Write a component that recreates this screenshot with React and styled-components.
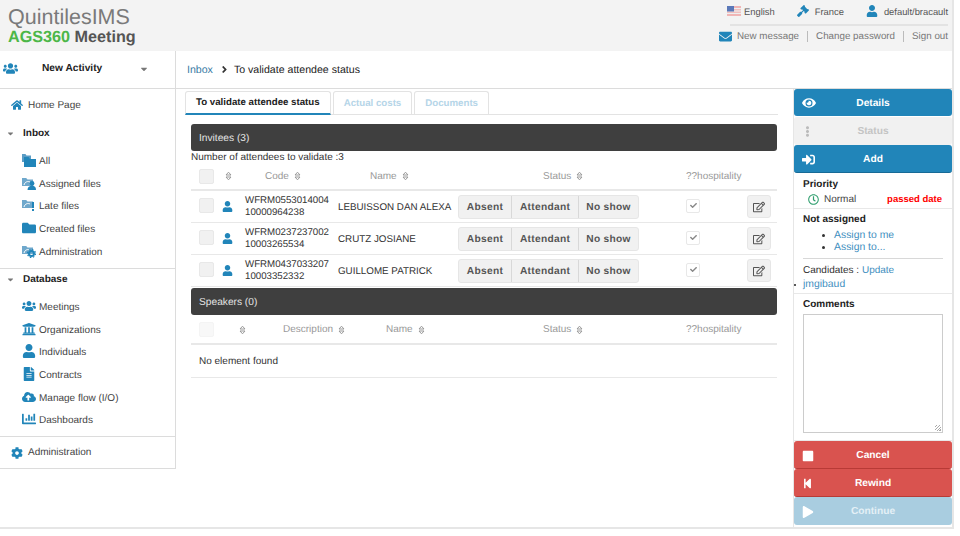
import React from 'react';
import styled, { createGlobalStyle } from 'styled-components';
import {
  FaHome, FaFolder, FaUsers, FaUniversity, FaUser, FaFileAlt, FaCloudUploadAlt,
  FaChartBar, FaCog, FaGavel, FaEnvelope, FaEye, FaEllipsisV, FaSignInAlt, FaStop, FaStepBackward,
  FaPlay, FaCheck, FaRegEdit, FaRegClock, FaCaretDown, FaAngleRight,
} from 'react-icons/fa';

const Global = createGlobalStyle`
  html, body { margin: 0; padding: 0; background: #fff; }
  body {
    font-family: "Liberation Sans", Arial, sans-serif;
    font-size: 10px;
    color: #333;
    text-rendering: geometricPrecision;
  }
  * { box-sizing: border-box; }
`;

const blue = '#2185b9';

const Page = styled.div`
  width: 954px;
  height: 529px;
  border-right: 2px solid #e6e6e6;
  border-bottom: 2px solid #e6e6e6;
  display: flex;
  flex-direction: column;
  overflow: hidden;
`;

const Header = styled.header`
  height: 51px;
  flex: none;
  background: #f3f3f3;
  display: flex;
  justify-content: space-between;
  padding: 0 4px 0 8px;
`;

const Logo = styled.div`
  padding-top: 5px;
`;

const LogoTop = styled.div`
  font-size: 21.5px;
  line-height: 24px;
  color: #7a7a7a;
`;

const LogoBottom = styled.div`
  font-size: 16.2px;
  line-height: 17px;
  font-weight: 700;
  color: #555;
  span { color: #4cb748; }
`;

const HeaderRight = styled.div`
  width: 218px;
  display: flex;
  flex-direction: column;
  align-items: stretch;
`;

const TopLinks = styled.div`
  height: 26px;
  padding-top: 1px;
  padding-bottom: 3px;
  border-bottom: 2px solid #e3e3e3;
  display: flex;
  justify-content: flex-end;
  align-items: center;
  gap: 22px;
  font-size: 9.4px;
  color: #555;
  white-space: nowrap;
`;

const TopLink = styled.span`
  display: flex;
  align-items: center;
  gap: ${p => p.$gap || 6}px;
  svg { color: ${blue}; font-size: 12px; }
`;

const SubLinks = styled.div`
  display: flex;
  justify-content: flex-end;
  align-items: center;
  height: 21px;
  font-size: 9.8px;
  color: #777;
  white-space: nowrap;
`;

const SubLink = styled.span`
  display: flex;
  align-items: center;
  gap: 5px;
  padding: 0 8px;
  height: 11px;
  border-left: ${p => (p.$first ? 'none' : '1px solid #bbb')};
  &:last-child { padding-right: 0; }
  svg { color: ${blue}; font-size: 13px; }
`;

const Body = styled.div`
  flex: 1;
  display: flex;
  min-height: 0;
`;

const Sidebar = styled.aside`
  width: 176px;
  flex: none;
  height: 418px;
  border-right: 1px solid #dcdcdc;
  border-bottom: 1px solid #dcdcdc;
  display: flex;
  flex-direction: column;
`;

const Activity = styled.div`
  height: 38px;
  flex: none;
  border-bottom: 1px solid #dcdcdc;
  display: flex;
  align-items: center;
  padding: 0 26px 2px 3px;
  font-weight: 700;
  font-size: 10.2px;
  color: #222;
  svg:first-child { color: ${blue}; font-size: 15px; }
  svg:last-child { color: #777; font-size: 10px; }
`;

const ActivityLabel = styled.span`
  flex: 1;
  padding-left: 24px;
`;

const NavSection = styled.div`
  border-bottom: ${p => (p.$last ? 'none' : '1px solid #dcdcdc')};
  padding: ${p => p.$pad || '0'};
`;

const TopItem = styled.div`
  height: 22.7px;
  display: flex;
  align-items: center;
  padding-left: 11px;
  gap: 5px;
  color: #444;
  svg { color: ${blue}; font-size: 12px; width: 12px; }
`;

const GroupTitle = styled.div`
  height: 20px;
  margin: ${p => p.$top}px 0 6.7px;
  display: flex;
  align-items: center;
  padding-left: 6px;
  gap: 8px;
  font-weight: 700;
  color: #222;
  svg { color: #777; font-size: 9px; width: 9px; }
`;

const NavItem = styled.div`
  height: 22.7px;
  display: flex;
  align-items: center;
  padding-left: 22px;
  gap: 3px;
  color: #444;
  svg { color: ${blue}; font-size: 14px; width: 14px; height: 14px; flex: none; margin-top: -3px; }
`;

const Main = styled.main`
  flex: 1;
  min-width: 0;
  display: flex;
  flex-direction: column;
`;

const Crumbs = styled.div`
  height: 38px;
  flex: none;
  border-bottom: 1px solid #dcdcdc;
  display: flex;
  align-items: center;
  gap: 4px;
  padding: 0 0 0 11px;
  margin-right: -1px;
  font-size: 10.6px;
  color: #222;
  a { color: #3a7ca5; margin-right: 2px; }
  svg { font-size: 11px; color: #333; }
`;

const Content = styled.div`
  flex: 1;
  display: flex;
  min-height: 0;
`;

const Center = styled.div`
  width: 618px;
  flex: none;
  padding: 2px 17px 0 9px;
`;

const Tabs = styled.div`
  height: 24px;
  display: flex;
  gap: 2px;
  border-bottom: 1px solid #e3e3e3;
  margin-right: -1px;
  margin-bottom: 9px;
`;

const Tab = styled.div`
  padding: 0 10px;
  display: flex;
  align-items: center;
  font-weight: 700;
  font-size: 9.7px;
  border: 1px solid #e3e3e3;
  border-bottom: ${p => (p.$active ? `2px solid ${blue}` : 'none')};
  border-radius: 3px 3px 0 0;
  color: ${p => (p.$active ? '#222' : '#b5d5e8')};
  height: ${p => (p.$active ? '24px' : '23px')};
`;

const PanelBar = styled.div`
  height: 27px;
  margin-left: 6px;
  padding: 2px 0 0 8px;
  background: #3f3f3f;
  border-radius: 3px;
  color: #e4e4e4;
  display: flex;
  align-items: center;
  font-size: 10.2px;
`;

const CountLine = styled.div`
  height: 12px;
  line-height: 13px;
  margin-left: 6px;
  color: #333;
`;

const Grid = styled.div`
  margin-left: 6px;
  display: grid;
  grid-template-columns: ${p => p.$cols};
  align-items: center;
  height: ${p => p.$h}px;
  border-bottom: ${p => (p.$line === 'thick' ? 2 : 1)}px solid #e8e8e8;
`;

const HeadCell = styled.div`
  color: #999;
  display: flex;
  align-items: center;
  gap: 5px;
  padding-left: ${p => p.$left || 0}px;
  white-space: nowrap;
`;

const SortSvg = styled.svg`
  width: 7px;
  height: 10px;
  flex: none;
  fill: none;
  stroke: #999;
  stroke-width: 1;
`;

const Check = styled.div`
  width: 15px;
  height: 15px;
  margin: ${p => (p.$row ? '-2px' : '0')} 0 0 8px;
  background: ${p => (p.$faint ? '#f8f8f8' : '#f1f1f1')};
  border: 1px solid ${p => (p.$faint ? '#f4f4f4' : '#e8e8e8')};
  border-radius: 2px;
`;

const PersonCell = styled.div`
  margin-top: -1px;
  svg { color: ${blue}; font-size: 11px; display: block; }
`;

const Code = styled.div`
  line-height: 11.5px;
  color: #333;
  font-size: 9.7px;
`;

const Name = styled.div`
  color: #333;
  white-space: nowrap;
  font-size: 9.8px;
  padding-top: 2px;
`;

const BtnGroup = styled.div`
  display: flex;
  height: 24px;
  background: #f1f1f1;
  border: 1px solid #e6e6e6;
  border-radius: 3px;
  width: 181px;
`;

const StatusBtn = styled.div`
  flex: none;
  width: ${p => p.$w}px;
  padding-top: 2px;
  display: flex;
  align-items: center;
  justify-content: center;
  font-weight: 700;
  font-size: 10.2px;
  color: #555;
  letter-spacing: 0.3px;
  border-left: ${p => (p.$first ? 'none' : '1px solid #d8d8d8')};
`;

const Hosp = styled.div`
  width: 14px;
  height: 14px;
  margin-top: -2px;
  border: 1px solid #e8e8e8;
  border-radius: 2px;
  display: flex;
  align-items: center;
  justify-content: center;
  svg { font-size: 7px; color: #888; }
`;

const EditBtn = styled.div`
  width: 24px;
  height: 23px;
  background: #f1f1f1;
  border: 1px solid #e6e6e6;
  border-radius: 3px;
  display: flex;
  align-items: center;
  justify-content: center;
  svg { font-size: 12px; color: #555; }
`;

const Empty = styled.div`
  margin-left: 6px;
  height: 33px;
  padding: 1px 0 0 8px;
  display: flex;
  align-items: center;
  border-bottom: 1px solid #e8e8e8;
  color: #333;
`;

const Right = styled.div`
  width: 159px;
  flex: none;
  margin-left: -1px;
  display: flex;
  flex-direction: column;
  border-left: 1px solid #e6e6e6;
`;

const Action = styled.div`
  height: ${p => p.$h || 28}px;
  margin-bottom: ${p => p.$gap || 0}px;
  padding-top: 2px;
  flex: none;
  display: flex;
  align-items: center;
  position: relative;
  justify-content: center;
  border-radius: 3px;
  font-weight: 700;
  font-size: 10.2px;
  color: ${p => p.$text || '#fff'};
  background: ${p => p.$bg};
  border-bottom: 1px solid ${p => p.$edge || 'transparent'};
  svg { position: absolute; left: 8px; font-size: ${p => p.$icon || 12}px; color: ${p => p.$iconColor || '#fff'}; }
`;

const Card = styled.div`
  padding: ${p => p.$pad};
  border-bottom: 1px solid #e8e8e8;
  height: ${p => p.$h}px;
  flex: none;
`;

const CardTitle = styled.div`
  font-weight: 700;
  color: #222;
  line-height: 13px;
`;

const PriorityRow = styled.div`
  display: flex;
  justify-content: space-between;
  align-items: center;
  padding: 0 1px 0 5px;
  margin-top: 3px;
  color: #444;
  span:first-child { display: flex; align-items: center; gap: 5px; }
  svg { color: #2f9e6e; font-size: 11px; }
`;

const Passed = styled.span`
  color: #f00;
  font-weight: 700;
  font-size: 9.5px;
`;

const Links = styled.ul`
  margin: 4px 0 4px;
  padding: 0 0 0 31px;
  line-height: 12px;
  font-size: 10.4px;
  color: #333;
`;

const LinkText = styled.span`
  color: #3f8fc0;
`;

const Divider = styled.div`
  height: 1px;
  background: #d8d8d8;
  margin-bottom: 6px;
`;

const Candidate = styled.div`
  margin-top: 2px;
  position: relative;
  line-height: 14px;
  font-size: 10.4px;
  &::before {
    content: '';
    position: absolute;
    left: -9px;
    top: 6px;
    width: 2px;
    height: 2px;
    border-radius: 50%;
    background: #222;
  }
`;

const CommentBox = styled.div`
  height: 119px;
  margin-top: 3px;
  background: #fff;
  border: 1px solid #ccc;
  position: relative;
  &::after {
    content: '';
    position: absolute;
    right: 1px;
    bottom: 1px;
    width: 6px;
    height: 6px;
    background: repeating-linear-gradient(135deg, transparent 0 1px, #aaa 1px 2px);
  }
`;

const UsFlag = () => (
  <svg viewBox="0 0 14 10" width="14" height="10">
    <rect width="14" height="10" fill="#f0b5b5" />
    <rect y="2" width="14" height="1.2" fill="#eee" />
    <rect y="4.4" width="14" height="1.2" fill="#eee" />
    <rect y="6.8" width="14" height="1.2" fill="#eee" />
    <rect width="7" height="5.5" fill="#5a78b8" />
  </svg>
);

const SortIcon = () => (
  <SortSvg viewBox="0 0 7 10">
    <path d="M1 4 L3.5 1.2 L6 4 Z" />
    <path d="M1 6 L3.5 8.8 L6 6 Z" />
  </SortSvg>
);

const folderPath = (x, y, w, h) =>
  `M${x} ${y + 1}h${w * 0.38}l${w * 0.12} ${h * 0.18}h${w * 0.5}v${h * 0.82 - 1}h-${w}z`;

// dossier clair en arriere-plan, le reste dessine par-dessus
const LightFolder = () => <path d={folderPath(0, 1, 11, 9)} fill="#6fa8cc" />;

const AllIcon = () => (
  <svg viewBox="0 0 14 14">
    <path d={folderPath(0, 0, 9, 9)} fill="#5b9cc4" />
    <path d={folderPath(2, 3, 12, 11)} fill={blue} />
  </svg>
);

const AssignedIcon = () => (
  <svg viewBox="0 0 14 14">
    <LightFolder />
    <path d="M2 9 C3 5.5 6 5 8 6" stroke="#fff" strokeWidth="1" fill="none" />
    <circle cx="10" cy="7.5" r="2.4" fill={blue} />
    <path d="M5.5 14c0-3 2-4.2 4.5-4.2s4 1.2 4 4.2z" fill={blue} />
  </svg>
);

const LateIcon = () => (
  <svg viewBox="0 0 14 14">
    <LightFolder />
    <path d="M2 9 C3 5.5 6 5 8 6" stroke="#fff" strokeWidth="1" fill="none" />
    <rect x="10" y="4" width="2" height="6" fill={blue} />
    <rect x="10" y="11" width="2" height="2" fill={blue} />
  </svg>
);

const AdminFolderIcon = () => (
  <svg viewBox="0 0 14 14">
    <LightFolder />
    <path d="M2 9 C3 5.5 6 5 8 6" stroke="#fff" strokeWidth="1" fill="none" />
    <circle cx="9.5" cy="9.5" r="2.5" fill="none" stroke={blue} strokeWidth="2" />
    <circle cx="9.5" cy="9.5" r="4" fill="none" stroke={blue} strokeWidth="1.2" strokeDasharray="1.5 1.64" />
  </svg>
);

const inboxItems = [
  [AllIcon, 'All'],
  [AssignedIcon, 'Assigned files'],
  [LateIcon, 'Late files'],
  [FaFolder, 'Created files'],
  [AdminFolderIcon, 'Administration'],
];

const dbItems = [
  [FaUsers, 'Meetings'],
  [FaUniversity, 'Organizations'],
  [FaUser, 'Individuals'],
  [FaFileAlt, 'Contracts'],
  [FaCloudUploadAlt, 'Manage flow (I/O)'],
  [FaChartBar, 'Dashboards'],
];

const invitees = [
  ['WFRM0553014004', '10000964238', 'LEBUISSON DAN ALEXA'],
  ['WFRM0237237002', '10003265534', 'CRUTZ JOSIANE'],
  ['WFRM0437033207', '10003352332', 'GUILLOME PATRICK'],
];

const inviteeCols = '31px 23px 93px 112px 8px 228px 61px 30px';
const speakerCols = '40px 52px 103px 157px 143px 91px';

export default function App() {
  return (
    <>
      <Global />
      <Page>
        <Header>
          <Logo>
            <LogoTop>QuintilesIMS</LogoTop>
            <LogoBottom><span>AGS360</span> Meeting</LogoBottom>
          </Logo>
          <HeaderRight>
            <TopLinks>
              <TopLink $gap={3}><UsFlag />English</TopLink>
              <TopLink><FaGavel />France</TopLink>
              <TopLink><FaUser />default/bracault</TopLink>
            </TopLinks>
            <SubLinks>
              <SubLink $first><FaEnvelope />New message</SubLink>
              <SubLink>Change password</SubLink>
              <SubLink>Sign out</SubLink>
            </SubLinks>
          </HeaderRight>
        </Header>
        <Body>
          <Sidebar>
            <Activity>
              <FaUsers />
              <ActivityLabel>New Activity</ActivityLabel>
              <FaCaretDown />
            </Activity>
            <NavSection $pad="5px 0 4px">
              <TopItem><FaHome />Home Page</TopItem>
              <GroupTitle $top={6.7}><FaCaretDown />Inbox</GroupTitle>
              {inboxItems.map(([Icon, label]) => (
                <NavItem key={label}><Icon />{label}</NavItem>
              ))}
            </NavSection>
            <NavSection $pad="1px 0 4px">
              <GroupTitle $top={0}><FaCaretDown />Database</GroupTitle>
              {dbItems.map(([Icon, label]) => (
                <NavItem key={label}><Icon />{label}</NavItem>
              ))}
            </NavSection>
            <NavSection $last $pad="4px 0 0">
              <TopItem><FaCog />Administration</TopItem>
            </NavSection>
          </Sidebar>
          <Main>
            <Crumbs>
              <a>Inbox</a>
              <FaAngleRight />
              <span>To validate attendee status</span>
            </Crumbs>
            <Content>
              <Center>
                <Tabs>
                  <Tab $active>To validate attendee status</Tab>
                  <Tab>Actual costs</Tab>
                  <Tab>Documents</Tab>
                </Tabs>
                <PanelBar>Invitees (3)</PanelBar>
                <CountLine>Number of attendees to validate :3</CountLine>
                <Grid $cols={inviteeCols} $h={28} $line="thick">
                  <Check />
                  <HeadCell $left={3}><SortIcon /></HeadCell>
                  <HeadCell $left={20}>Code <SortIcon /></HeadCell>
                  <HeadCell $left={32}>Name <SortIcon /></HeadCell>
                  <div />
                  <HeadCell $left={85}>Status <SortIcon /></HeadCell>
                  <HeadCell>??hospitality</HeadCell>
                  <div />
                </Grid>
                {invitees.map(([code, id, name]) => (
                  <Grid key={code} $cols={inviteeCols} $h={32}>
                    <Check $row />
                    <PersonCell><FaUser /></PersonCell>
                    <Code>{code}<br />{id}</Code>
                    <Name>{name}</Name>
                    <div />
                    <BtnGroup>
                      <StatusBtn $first $w={52}>Absent</StatusBtn>
                      <StatusBtn $w={67}>Attendant</StatusBtn>
                      <StatusBtn $w={60}>No show</StatusBtn>
                    </BtnGroup>
                    <Hosp><FaCheck /></Hosp>
                    <EditBtn><FaRegEdit /></EditBtn>
                  </Grid>
                ))}
                <PanelBar style={{ marginTop: 1 }}>Speakers (0)</PanelBar>
                <Grid $cols={speakerCols} $h={29} $line="thick" style={{ marginTop: 1 }}>
                  <Check $faint />
                  <HeadCell $left={8}><SortIcon /></HeadCell>
                  <HeadCell>Description <SortIcon /></HeadCell>
                  <HeadCell>Name <SortIcon /></HeadCell>
                  <HeadCell>Status <SortIcon /></HeadCell>
                  <HeadCell>??hospitality</HeadCell>
                </Grid>
                <Empty>No element found</Empty>
              </Center>
              <Right>
                <Action $h={27} $gap={1} $bg={blue} $icon={14}><FaEye />Details</Action>
                <Action $bg="#f1f1f1" $text="#c4c4c4" $iconColor="#bbb" $icon={11}><FaEllipsisV />Status</Action>
                <Action $bg={blue} $edge="#176a96" $icon={13}><FaSignInAlt />Add</Action>
                <Card $h={36} $pad="5px 9px">
                  <CardTitle>Priority</CardTitle>
                  <PriorityRow>
                    <span><FaRegClock />Normal</span>
                    <Passed>passed date</Passed>
                  </PriorityRow>
                </Card>
                <Card $h={85} $pad="4px 9px">
                  <CardTitle>Not assigned</CardTitle>
                  <Links>
                    <li><LinkText>Assign to me</LinkText></li>
                    <li><LinkText>Assign to...</LinkText></li>
                  </Links>
                  <Divider />
                  <div>Candidates : <LinkText>Update</LinkText></div>
                  <Candidate><LinkText>jmgibaud</LinkText></Candidate>
                </Card>
                <Card $h={147} $pad="4px 9px">
                  <CardTitle>Comments</CardTitle>
                  <CommentBox />
                </Card>
                <Action $bg="#d9534f" $edge="#b83a36" $icon={12}><FaStop />Cancel</Action>
                <Action $bg="#d9534f" $edge="#b83a36" $icon={11}><FaStepBackward />Rewind</Action>
                <Action $bg="#a9cde0" $text="#e4f0f6" $icon={12}><FaPlay />Continue</Action>
              </Right>
            </Content>
          </Main>
        </Body>
      </Page>
    </>
  );
}
